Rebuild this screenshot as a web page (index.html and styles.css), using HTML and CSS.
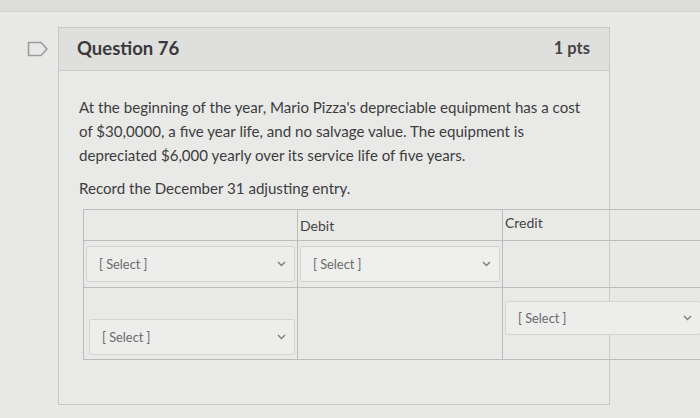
FILE: index.html
```html
<!DOCTYPE html>
<html lang="en">
<head>
<meta charset="utf-8">
<title>Question 76</title>
<link rel="stylesheet" href="styles.css">
</head>
<body>
<div class="prev-strip"></div>
<div class="layout">
  <div class="flag-col">
    <svg class="flag" width="22" height="16" viewBox="0 0 22 16" aria-hidden="true">
      <path d="M1.5 1.5 H14 L20 8 L14 14.5 H1.5 Z" fill="none" stroke="#9c9c9c" stroke-width="1.6" stroke-linejoin="round"/>
    </svg>
  </div>
  <div class="card">
    <div class="card-header">
      <span class="q-title">Question 76</span>
      <span class="q-pts">1 pts</span>
    </div>
    <div class="card-body">
      <p class="para">At the beginning of the year, Mario Pizza's depreciable equipment has a cost of $30,0000, a five year life, and no salvage value. The equipment is depreciated $6,000 yearly over its service life of five years.</p>
      <p class="para">Record the December 31 adjusting entry.</p>
      <table class="entry">
        <colgroup>
          <col class="c1"><col class="c2"><col class="c3">
        </colgroup>
        <tr class="head-row">
          <th></th>
          <th class="th-debit">Debit</th>
          <th class="th-credit">Credit</th>
        </tr>
        <tr class="row2">
          <td class="cell-top"><div class="sel"><span>[ Select ]</span><svg class="chev" width="9" height="6" viewBox="0 0 9 6"><path d="M1 1 L4.5 4.5 L8 1" fill="none" stroke="#7d7d7d" stroke-width="1.4"/></svg></div></td>
          <td class="cell-top"><div class="sel sel-hi"><span>[ Select ]</span><svg class="chev" width="9" height="6" viewBox="0 0 9 6"><path d="M1 1 L4.5 4.5 L8 1" fill="none" stroke="#7d7d7d" stroke-width="1.4"/></svg></div></td>
          <td></td>
        </tr>
        <tr class="row3">
          <td class="cell-bottom"><div class="sel"><span>[ Select ]</span><svg class="chev" width="9" height="6" viewBox="0 0 9 6"><path d="M1 1 L4.5 4.5 L8 1" fill="none" stroke="#7d7d7d" stroke-width="1.4"/></svg></div></td>
          <td></td>
          <td class="cell-upper"><div class="sel sel-wide"><span>[ Select ]</span><svg class="chev" width="9" height="6" viewBox="0 0 9 6"><path d="M1 1 L4.5 4.5 L8 1" fill="none" stroke="#7d7d7d" stroke-width="1.4"/></svg></div></td>
        </tr>
      </table>
    </div>
  </div>
</div>
</body>
</html>
```

FILE: styles.css
```css
html, body {
  margin: 0;
  padding: 0;
}
body {
  width: 700px;
  height: 418px;
  overflow: hidden;
  background: #e8e8e7;
  font-family: Lato, "Open Sans", sans-serif;
  color: #3b3b3b;
}
.prev-strip {
  height: 11px;
  background: #dcdcdb;
  border-bottom: 1px solid #d2d2d2;
}
.layout {
  display: flex;
  align-items: flex-start;
  padding-top: 15px;
}
.flag-col {
  width: 58px;
  flex: none;
  padding-top: 14px;
  padding-left: 27px;
  box-sizing: border-box;
}
.flag {
  display: block;
}
.card {
  width: 550px;
  flex: none;
  border: 1px solid #c9c9c9;
  background: #e9e9e8;
}
.card-header {
  height: 43px;
  background: #dfdfde;
  border-bottom: 1px solid #cbcbcb;
  display: flex;
  align-items: center;
  justify-content: space-between;
  padding: 0 19px 3px 18px;
  box-sizing: border-box;
  font-weight: 700;
}
.q-title {
  font-size: 18.5px;
  color: #3a3a3a;
}
.q-pts {
  font-size: 16.5px;
  color: #444;
}
.card-body {
  padding: 24px 0 44px 20px;
}
.para {
  margin: 0 0 9px 0;
  font-size: 15.1px;
  line-height: 24px;
  width: 505px;
  color: #3d3d3d;
}
.entry {
  margin-left: 4px;
  margin-top: 9px;
  border-collapse: collapse;
  width: 620px;
  table-layout: fixed;
}
.entry col.c1 { width: 214px; }
.entry col.c2 { width: 205px; }
.entry col.c3 { width: 201px; }
.entry th, .entry td {
  border: 1px solid #bcbcbc;
  padding: 0;
}
.head-row { height: 31px; }
.row2 { height: 47px; }
.row3 { height: 72px; }
.head-row th {
  text-align: left;
  font-weight: 400;
  font-size: 14px;
  line-height: 18px;
  color: #444;
  vertical-align: top;
}
.th-debit {
  padding: 7px 0 0 2px !important;
}
.th-credit {
  padding: 4px 0 0 2px !important;
}
.cell-top {
  vertical-align: top;
  padding: 5px 2px 0 2px !important;
}
.cell-bottom {
  vertical-align: bottom;
  padding: 0 2px 4px 5px !important;
}
.cell-upper {
  vertical-align: top;
  padding: 13px 0 0 2px !important;
}
.sel {
  height: 36px;
  box-sizing: border-box;
  border: 1px solid #d3d3d2;
  border-radius: 3px;
  background: #ededec;
  display: flex;
  align-items: center;
  justify-content: space-between;
  padding: 0 8px 0 12px;
  font-size: 12.8px;
  color: #6a6a6a;
}
.sel-hi {
  background: #efefee;
}
.sel-wide {
  height: 34px;
  width: 196px;
}
.chev {
  display: block;
  flex: none;
}
```
